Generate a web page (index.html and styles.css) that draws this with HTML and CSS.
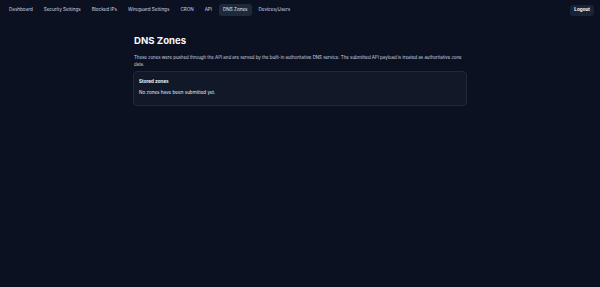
FILE: index.html
```html
<!DOCTYPE html>
<html lang="en">
<head>
  <meta charset="UTF-8" />
  <meta name="viewport" content="width=device-width, initial-scale=1.0"/>
  <title>DNS Zones</title>
  <link rel="stylesheet" href="styles.css">
</head>
<body>

  <!-- Top navigation -->
  <nav class="topbar">
    <div class="nav-links">
      <a class="nav-link" href="#">Dashboard</a>
      <a class="nav-link" href="#">Security Settings</a>
      <a class="nav-link" href="#">Blocked IPs</a>
      <a class="nav-link" href="#">Wireguard Settings</a>
      <a class="nav-link" href="#">CRON</a>
      <a class="nav-link" href="#">API</a>
      <a class="nav-link active" href="#">DNS Zones</a>
      <a class="nav-link" href="#">Devices/Users</a>
    </div>
    <button class="logout-btn">Logout</button>
  </nav>

  <main class="page">
    <h1>DNS Zones</h1>
    <p class="intro">These zones were pushed through the API and are served by the built-in authoritative DNS service. The submitted API payload is treated as authoritative zone data.</p>

    <section class="card">
      <h2>Stored zones</h2>
      <div class="empty">No zones have been submitted yet.</div>
    </section>
  </main>

</body>
</html>
```

FILE: styles.css
```css
* {
  box-sizing: border-box;
}

body {
  margin: 0;
  font-family: Inter, 'Noto Sans', sans-serif;
  background-color: #0b1120;
  color: #e5e7eb;
  min-height: 100vh;
}

.topbar {
  display: flex;
  align-items: center;
  justify-content: space-between;
  padding: 4px 6px 4px 5px;
  height: 20px;
}

.nav-links {
  display: flex;
  gap: 3px;
}

.nav-link {
  font-size: 4.6px;
  line-height: 6px;
  padding: 3px 4px;
  border-radius: 3px;
  color: #cbd5e1;
  text-decoration: none;
}

.nav-link.active {
  background: #1e293b;
  color: #e2e8f0;
}

.logout-btn {
  font-family: inherit;
  font-size: 4.6px;
  line-height: 6px;
  font-weight: 700;
  padding: 2.5px 4px;
  border: none;
  border-radius: 3px;
  background: #1a2233;
  color: #ffffff;
}

.page {
  width: 334px;
  margin: 0 auto;
  padding-top: 14px;
}

h1 {
  font-size: 9.6px;
  line-height: 14px;
  font-weight: 700;
  margin: 0 0 6px 1px;
  color: #f8fafc;
}

.intro {
  font-size: 4.4px;
  line-height: 7px;
  color: #cbd5e1;
  margin: 0 0 3px 1px;
}

.card {
  background: #111827;
  border: 1px solid #1f2937;
  border-radius: 4px;
  padding: 6px 5px 9px;
}

h2 {
  font-size: 4.6px;
  line-height: 7px;
  font-weight: 700;
  margin: 0 0 4px;
  color: #f1f5f9;
}

.empty {
  font-size: 4.6px;
  line-height: 7px;
  color: #e2e8f0;
}
```
